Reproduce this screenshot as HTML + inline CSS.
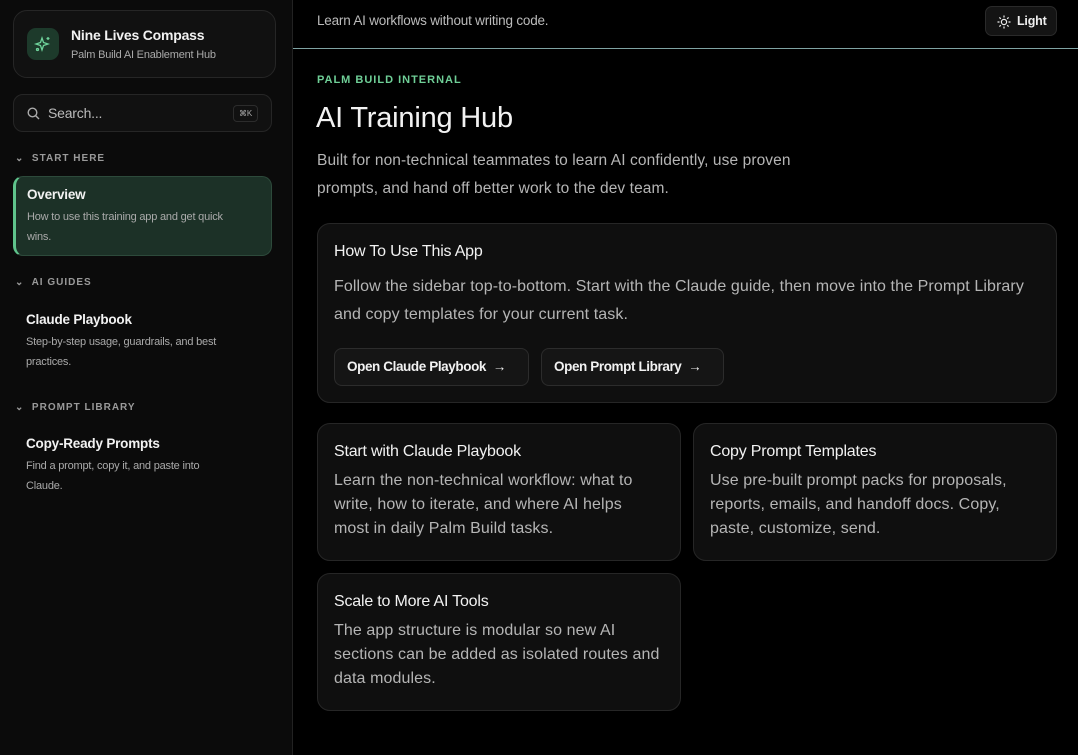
<!DOCTYPE html>
<html><head><meta charset="utf-8"><style>
*{box-sizing:border-box;margin:0;padding:0}
body{width:1078px;height:755px;background:#000;font-family:"Liberation Sans",sans-serif;color:#eee;position:relative;overflow:hidden;letter-spacing:-0.2px}
.side{position:absolute;left:0;top:0;width:293px;height:755px;background:#0b0b0b;border-right:1px solid #222}
.brand{position:absolute;left:13px;top:10px;width:263px;height:68px;border:1px solid #262626;border-radius:14px;background:#111}
.logo{position:absolute;left:13px;top:17px;width:32px;height:32px;border-radius:9px;background:#1d3a2b}
.brand b{position:absolute;left:57px;top:16px;font-size:14px;color:#f2f2f2}
.brand span{position:absolute;left:57px;top:38px;font-size:11px;color:#aaa}
.search{position:absolute;left:13px;top:94px;width:259px;height:38px;border:1px solid #262626;border-radius:10px;background:#111;font-size:14px;color:#bbb}
.kbd{position:absolute;right:13px;top:10px;width:25px;height:17px;border:1px solid #2c2c2c;border-radius:4px;font-size:8px;color:#aaa;text-align:center;line-height:15px}
.sec{position:absolute;left:15px;font-size:10px;font-weight:bold;letter-spacing:1px;color:#9a9a9a}
.item{position:absolute;left:13px;width:259px;padding:10px 13px}
.item b{display:block;font-size:13.5px;color:#f2f2f2;margin-bottom:5px}
.item span{display:block;font-size:11px;line-height:20px;color:#aaa;width:230px}
.act{background:#1c3127;border:1px solid #2d4a3b;border-radius:10px;border-left:3px solid #5fc48c}
.top{position:absolute;left:293px;top:0;right:0;height:49px;border-bottom:1px solid #7fa3a3}
.top p{position:absolute;left:24px;top:13px;font-size:13.5px;color:#bbb}
.light{position:absolute;right:21px;top:6px;width:72px;height:30px;border:1px solid #2a2a2a;border-radius:7px;background:#141414;font-size:12.5px;font-weight:bold;color:#eee;padding:7px 0 0 31px}
.card{position:absolute;border:1px solid #262626;border-radius:13px;background:#0f0f0f;padding:0 16px}
.card h3{font-weight:normal;font-size:16px;color:#f2f2f2;margin-top:19px}
.card p{font-size:16px;line-height:24px;color:#b5b5b5;margin-top:8px;letter-spacing:0.1px;white-space:nowrap}
.btn{position:absolute;top:124px;height:38px;border:1px solid #2c2c2c;border-radius:8px;background:#151515;font-size:13.5px;font-weight:bold;color:#f2f2f2;padding:10px 12px;letter-spacing:-0.4px}
</style></head><body>
<div class="side">
<div class="brand"><div class="logo"><svg width="32" height="32" viewBox="0 0 32 32" fill="none" stroke="#6fd39b" stroke-width="1.3"><path d="M15 10 L16.5 14.5 L21 16 L16.5 17.5 L15 22 L13.5 17.5 L9 16 L13.5 14.5Z"/><path d="M21 9v3M19.5 10.5h3"/><circle cx="10.5" cy="21.5" r="1"/></svg></div><b>Nine Lives Compass</b><span>Palm Build AI Enablement Hub</span></div>
<div class="search"><svg style="position:absolute;left:13px;top:12px" width="13" height="13" viewBox="0 0 13 13" fill="none" stroke="#aaa" stroke-width="1.4"><circle cx="5.5" cy="5.5" r="4.3"/><path d="M8.7 8.7 12 12"/></svg><span style="position:absolute;left:34px;top:10px">Search...</span><div class="kbd">⌘K</div></div>
<div class="sec" style="top:153px">⌄&nbsp; START HERE</div>
<div class="item act" style="top:176px;height:80px;padding-left:11px"><b>Overview</b><span>How to use this training app and get quick<br>wins.</span></div>
<div class="sec" style="top:277px">⌄&nbsp; AI GUIDES</div>
<div class="item" style="top:302px"><b>Claude Playbook</b><span>Step-by-step usage, guardrails, and best<br>practices.</span></div>
<div class="sec" style="top:402px">⌄&nbsp; PROMPT LIBRARY</div>
<div class="item" style="top:426px"><b>Copy-Ready Prompts</b><span>Find a prompt, copy it, and paste into<br>Claude.</span></div>
</div>
<div class="top"><p>Learn AI workflows without writing code.</p><div class="light"><svg style="position:absolute;left:11px;top:8px" width="14" height="14" viewBox="0 0 14 14" fill="none" stroke="#eee" stroke-width="1.2"><circle cx="7" cy="7" r="2.6"/><path d="M7 0.5v2M7 11.5v2M0.5 7h2M11.5 7h2M2.4 2.4l1.4 1.4M10.2 10.2l1.4 1.4M2.4 11.6l1.4-1.4M10.2 3.8l1.4-1.4"/></svg>Light</div></div>
<div style="position:absolute;left:317px;top:74px;font-size:11px;font-weight:bold;letter-spacing:1px;color:#6fcf97">PALM BUILD INTERNAL</div>
<div style="position:absolute;left:316px;top:102px;font-size:29px;color:#f2f2f2">AI Training Hub</div>
<div style="position:absolute;left:317px;top:147px;font-size:15.5px;line-height:28px;color:#b5b5b5;white-space:nowrap;letter-spacing:0.1px">Built for non-technical teammates to learn AI confidently, use proven<br>prompts, and hand off better work to the dev team.</div>
<div class="card" style="left:317px;top:223px;width:740px;height:180px"><h3>How To Use This App</h3><p style="line-height:28px;margin-top:12px">Follow the sidebar top-to-bottom. Start with the Claude guide, then move into the Prompt Library<br>and copy templates for your current task.</p>
<div class="btn" style="left:16px;width:195px">Open Claude Playbook &nbsp;→</div><div class="btn" style="left:223px;width:183px">Open Prompt Library &nbsp;→</div></div>
<div class="card" style="left:317px;top:423px;width:364px;height:138px"><h3>Start with Claude Playbook</h3><p>Learn the non-technical workflow: what to<br>write, how to iterate, and where AI helps<br>most in daily Palm Build tasks.</p></div>
<div class="card" style="left:693px;top:423px;width:364px;height:138px"><h3>Copy Prompt Templates</h3><p>Use pre-built prompt packs for proposals,<br>reports, emails, and handoff docs. Copy,<br>paste, customize, send.</p></div>
<div class="card" style="left:317px;top:573px;width:364px;height:138px"><h3>Scale to More AI Tools</h3><p>The app structure is modular so new AI<br>sections can be added as isolated routes and<br>data modules.</p></div>
</body></html>
